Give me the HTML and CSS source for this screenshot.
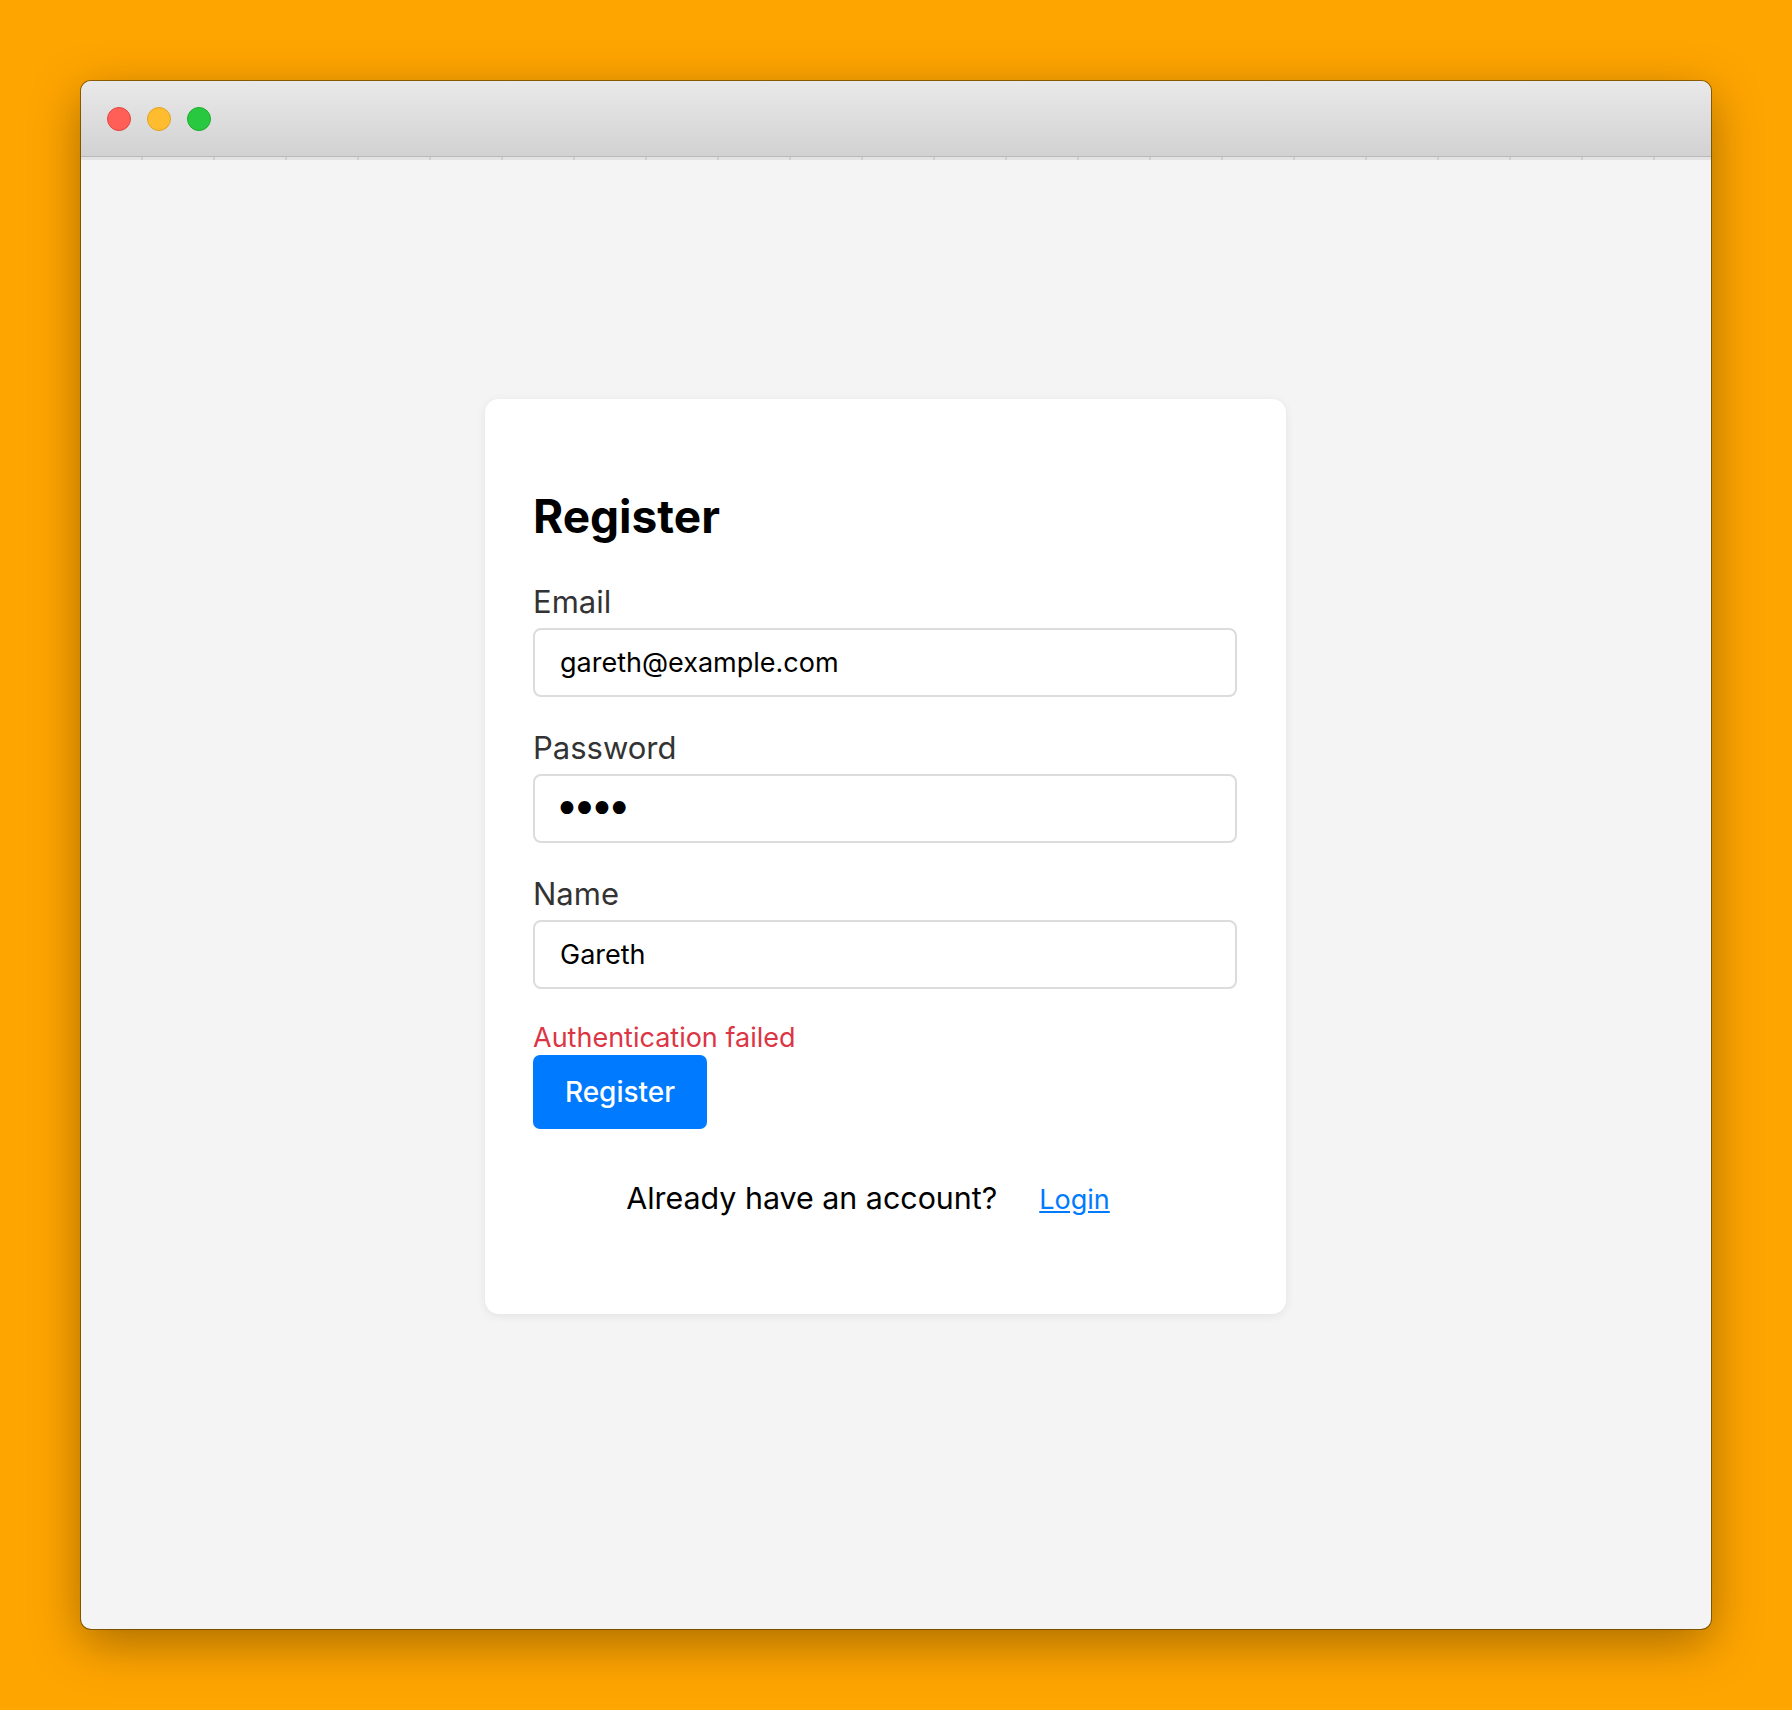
FILE: index.html
```html
<!DOCTYPE html>
<html lang="en">
<head>
<meta charset="utf-8">
<title>Register</title>
<link rel="stylesheet" href="styles.css">
</head>
<body>
<div class="window">
  <div class="titlebar">
    <span class="light red"></span>
    <span class="light yellow"></span>
    <span class="light green"></span>
  </div>
  <div class="tabstrip"></div>
  <main class="content">
    <form class="card">
      <h1 class="title">Register</h1>
      <div class="field">
        <label class="label" for="email">Email</label>
        <input class="input" id="email" type="text" value="gareth@example.com">
      </div>
      <div class="field">
        <label class="label" for="password">Password</label>
        <input class="input input-password" id="password" type="password" value="abcd">
      </div>
      <div class="field">
        <label class="label" for="name">Name</label>
        <input class="input" id="name" type="text" value="Gareth">
      </div>
      <p class="error">Authentication failed</p>
      <button class="btn" type="button">Register</button>
      <p class="footer"><span>Already have an account?</span> <a class="link" href="#">Login</a></p>
    </form>
  </main>
</div>
</body>
</html>
```
FILE: styles.css
```css
html, body {
  margin: 0;
  padding: 0;
}
body {
  background: #ffa500;
  padding: 81px;
  font-family: Inter, "Noto Sans", "Liberation Sans", sans-serif;
}
.window {
  width: 1630px;
  height: 1548px;
  border-radius: 10px;
  overflow: hidden;
  background: #f4f4f4;
  box-shadow: 0 0 0 1px rgba(60, 40, 0, 0.55), 0 14px 50px rgba(0, 0, 0, 0.35);
  display: flex;
  flex-direction: column;
}
.titlebar {
  height: 75px;
  flex: none;
  background: linear-gradient(#e9e9e9, #d2d2d2);
  border-bottom: 1px solid #b9b9b9;
  display: flex;
  align-items: center;
  gap: 16px;
  padding-left: 26px;
}
.light {
  width: 22px;
  height: 22px;
  border-radius: 50%;
  border: 1px solid transparent;
}
.red { background: #ff5f57; border-color: #e2463f; }
.yellow { background: #febc2e; border-color: #e1a325; }
.green { background: #28c840; border-color: #1bac2c; }
.tabstrip {
  height: 3px;
  flex: none;
  background: repeating-linear-gradient(90deg, #e3e3e3 0 60px, #cfcfcf 60px 62px, #e3e3e3 62px 72px);
}
.content {
  flex: 1;
  padding-top: 239px;
  padding-left: 404px;
}
.card {
  width: 704px;
  background: #fff;
  border-radius: 14px;
  box-shadow: 0 2px 10px rgba(0, 0, 0, 0.07);
  padding: 87px 49px 96px 48px;
}
.title {
  margin: 0 0 38px;
  font-size: 46px;
  line-height: 59px;
  padding-top: 1px;
  font-weight: 700;
  color: #000;
}
.field {
  margin-bottom: 33px;
}
.label {
  display: block;
  font-size: 31px;
  line-height: 36px;
  color: #333;
  margin-bottom: 8px;
}
.input {
  display: block;
  box-sizing: border-box;
  width: 704px;
  height: 69px;
  margin: 0;
  padding: 0 24px 0 25px;
  border: 2px solid #dcdcdc;
  border-radius: 8px;
  background: #fff;
  font-family: inherit;
  font-size: 27px;
  color: #000;
  outline: none;
}
.input-password {
  font-family: "DejaVu Sans", sans-serif;
  font-size: 44px;
  letter-spacing: -8.5px;
  padding-left: 19px;
}
.error {
  margin: 0 0 1px;
  font-size: 27px;
  line-height: 32px;
  color: #dc3545;
}
.btn {
  display: block;
  width: 174px;
  height: 74px;
  margin: 0;
  padding: 0;
  border: none;
  border-radius: 7px;
  background: #007bff;
  color: #fff;
  font-family: inherit;
  font-size: 28px;
  font-weight: 500;
}
.footer {
  margin: 51px 0 0;
  font-size: 30.4px;
  line-height: 36px;
  color: #000;
  display: flex;
  justify-content: center;
  align-items: baseline;
  gap: 42px;
  padding-right: 34px;
}
.link {
  font-size: 27px;
  color: #007bff;
  text-decoration: underline;
}
```
